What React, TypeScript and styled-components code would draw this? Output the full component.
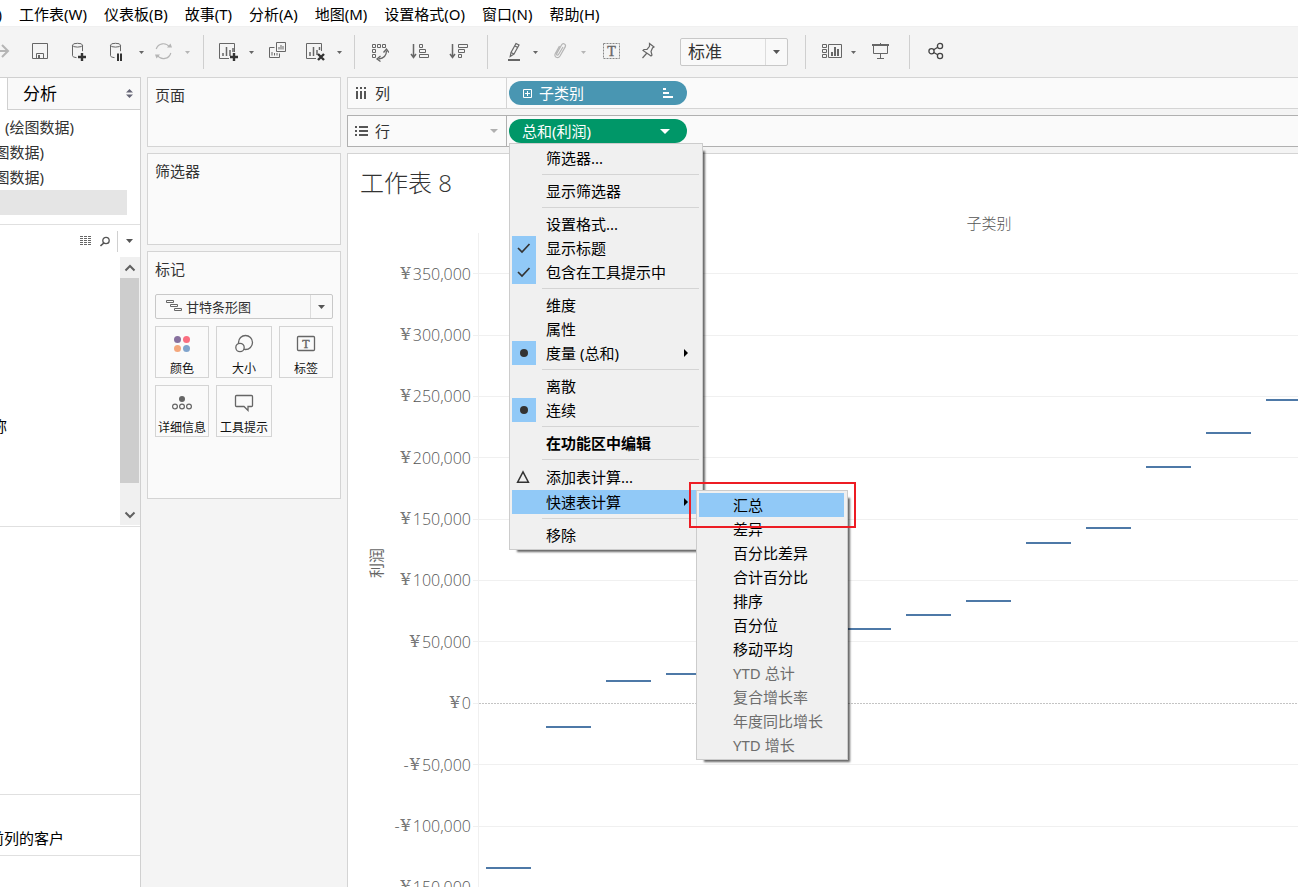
import React from "react";
import styled, { createGlobalStyle, css } from "styled-components";

const ui = `"Noto Sans", "Noto Sans CJK SC", sans-serif`;
const light = `"Open Sans", "Noto Sans CJK SC", sans-serif`;

const GlobalStyle = createGlobalStyle`
  *, *::before, *::after { box-sizing: border-box; }
  body { margin: 0; background: #f4f4f4; font: 15px/24px ${ui}; color: #333; }
  button, select { font: inherit; color: inherit; margin: 0; padding: 0; border: 0; background: none; border-radius: 0; }
  ul { list-style: none; margin: 0; padding: 0; }
  h1, h2 { margin: 0; font: inherit; }
  svg { display: block; flex: none; }
`;

const Shell = styled.div`
  display: flex;
  flex-direction: column;
  height: 100vh;
  overflow: hidden;
  white-space: nowrap;
`;

/* ---------- Menu bar ---------- */
const MenuBar = styled.nav`
  display: flex;
  gap: 17px;
  height: 26px;
  flex: none;
  padding-top: 1px;
  background: #fff;
  color: #000;
  align-items: center;
  line-height: 24px;
`;
const CutOff = styled.div<{ $w: number }>`
  display: flex;
  justify-content: flex-end;
  width: ${(p) => p.$w}px;
  overflow: hidden;
`;
const MenuBarItem = styled.button``;

/* ---------- Toolbar ---------- */
const Toolbar = styled.div`
  display: flex;
  align-items: center;
  height: 51px;
  flex: none;
  border-top: 1px solid #f0f0f0;
  color: #666;
`;
const ToolGroup = styled.div<{ $before?: number; $after?: number; $last?: boolean }>`
  display: flex;
  align-items: center;
  height: 34px;
  padding-left: ${(p) => p.$before ?? 0}px;
  padding-right: ${(p) => p.$after ?? 0}px;
  border-right: ${(p) => (p.$last ? "0" : "1px solid #cfcfcf")};
`;
const Tool = styled.button<{ $gap?: number; $w?: number; $dim?: boolean }>`
  display: flex;
  justify-content: flex-end;
  width: ${(p) => p.$w ?? 20}px;
  height: 20px;
  margin-left: ${(p) => p.$gap ?? 0}px;
  overflow: hidden;
  color: ${(p) => (p.$dim ? "#b5b5b5" : "#666")};
`;
const CaretTool = styled.button<{ $gap?: number; $dim?: boolean }>`
  display: flex;
  align-items: center;
  justify-content: center;
  width: 10px;
  height: 20px;
  margin-left: ${(p) => p.$gap ?? 8}px;
  color: ${(p) => (p.$dim ? "#b5b5b5" : "#666")};
`;
const SelectBox = styled.label<{ $h: number; $gap?: number }>`
  display: flex;
  align-items: center;
  height: ${(p) => p.$h}px;
  margin-left: ${(p) => p.$gap ?? 0}px;
  border: 1px solid #c8c8c8;
  border-radius: 2px;
  background: #f9f9f9;
  color: #333;
`;
const Select = styled.select<{ $size: number; $pad: number; $w?: number }>`
  appearance: none;
  flex: 1;
  width: ${(p) => (p.$w ? `${p.$w}px` : "auto")};
  min-width: 0;
  height: 100%;
  padding-left: ${(p) => p.$pad}px;
  font-size: ${(p) => p.$size}px;
`;
const SelectCaret = styled.span`
  display: flex;
  align-items: center;
  justify-content: center;
  width: 22px;
  align-self: stretch;
  border-left: 1px solid #dcdcdc;
  color: #555;
`;

/* ---------- Body ---------- */
const Body = styled.div`
  display: grid;
  grid-template-columns: 141px 206px minmax(0, 1fr);
  flex: 1;
  min-height: 0;
`;
const DataPane = styled.aside`
  display: flex;
  flex-direction: column;
  background: #fff;
  border-top: 1px solid #d0d0d0;
  border-right: 1px solid #d0d0d0;
  overflow: hidden;
  color: #000;
`;
const PaneTab = styled.button`
  display: flex;
  align-items: center;
  justify-content: space-between;
  flex: none;
  height: 32px;
  margin-left: 7px;
  padding: 0 7px 0 15px;
  border-left: 1px solid #d0d0d0;
  border-bottom: 1px solid #d0d0d0;
  background: #f9f9f9;
  font-size: 17px;
  color: #000;
`;
const SourceList = styled.ul`
  height: 115px;
  flex: none;
  padding-top: 5px;
  border-bottom: 1px solid #e0e0e0;
  color: #333;
`;
const SourceRow = styled.li<{ $selected?: boolean }>`
  height: 25px;
  width: 127px;
  line-height: 25px;
  background: ${(p) => (p.$selected ? "#e5e5e5" : "transparent")};
`;
const FieldTools = styled.div`
  display: flex;
  align-items: center;
  justify-content: flex-end;
  height: 32px;
  flex: none;
  color: #555;
`;
const FieldTool = styled.button<{ $w: number; $line?: boolean }>`
  display: flex;
  align-items: center;
  justify-content: ${(p) => (p.$line ? "center" : "flex-start")};
  width: ${(p) => p.$w}px;
  height: 21px;
  border-left: ${(p) => (p.$line ? "1px solid #d0d0d0" : "0")};
`;
const Fields = styled.div`
  display: flex;
  justify-content: space-between;
  height: 270px;
  flex: none;
  border-bottom: 1px solid #e0e0e0;
`;
const FieldName = styled.div<{ $top: number; $w: number }>`
  display: flex;
  justify-content: flex-end;
  width: ${(p) => p.$w}px;
  overflow: hidden;
  padding-top: ${(p) => p.$top}px;
`;
const ScrollBar = styled.div`
  display: flex;
  flex-direction: column;
  width: 20px;
  height: 268px;
  padding-right: 1px;
  background: #f0f0f0;
  color: #606060;
`;
const ScrollButton = styled.button`
  display: flex;
  align-items: center;
  justify-content: center;
  height: 21px;
`;
const ScrollThumb = styled.div`
  height: 205px;
  margin-bottom: auto;
  background: #cdcdcd;
`;
const Measures = styled.div`
  height: 268px;
  flex: none;
  border-bottom: 1px solid #e0e0e0;
`;
const Sets = styled.div`
  height: 61px;
  flex: none;
  border-bottom: 1px solid #e0e0e0;
`;

/* ---------- Cards ---------- */
const Cards = styled.div`
  display: flex;
  flex-direction: column;
  gap: 6px;
  padding: 0 6px;
`;
const Card = styled.section<{ $h: number }>`
  height: ${(p) => p.$h}px;
  flex: none;
  padding: 5px 7px;
  border: 1px solid #d4d4d4;
  background: #fafafa;
`;
const MarkSelect = styled.div`
  margin: 13px 0 7px;
`;
const MarkIcon = styled.span`
  padding: 0 0 4px 10px;
  color: #666;
`;
const MarkGrid = styled.div`
  display: grid;
  grid-template-columns: 54fr 56fr 54fr;
  gap: 7px;
`;
const MarkButton = styled.button`
  display: flex;
  flex-direction: column;
  align-items: center;
  justify-content: space-between;
  height: 52px;
  padding-top: 5px;
  border: 1px solid #d4d4d4;
  color: #666;
  font-size: 12px;
  line-height: 17px;
`;
const MarkLabel = styled.span`
  color: #111;
`;

/* ---------- Shelves ---------- */
const Main = styled.main`
  display: flex;
  flex-direction: column;
  gap: 6px;
  min-width: 0;
  min-height: 0;
`;
const Shelf = styled.div<{ $active?: boolean }>`
  --line: ${(p) => (p.$active ? "#b0b0b0" : "#d4d4d4")};
  display: flex;
  height: 32px;
  flex: none;
  border: 1px solid var(--line);
  border-right: 0;
  background: #fafafa;
`;
const ShelfName = styled.div`
  display: flex;
  align-items: center;
  gap: 7px;
  width: 159px;
  padding: 0 8px 0 7px;
  border-right: 1px solid var(--line);
`;
const Push = styled.span`
  margin-left: auto;
  color: #b0b0b0;
`;
const PillSlot = styled.div`
  position: relative;
  z-index: 2;
  padding: 3px 2px;
`;
const Pill = styled.button<{ $bg: string; $pad: string }>`
  display: flex;
  align-items: center;
  gap: 7px;
  width: 178px;
  height: 24px;
  padding: ${(p) => p.$pad};
  border-radius: 12px;
  background: ${(p) => p.$bg};
  color: #fff;
`;
const PillEnd = styled.span`
  margin-left: auto;
`;

/* ---------- Context menus ---------- */
const menuFrame = css`
  position: absolute;
  padding: 2px 3px 2px 2px;
  border: 1px solid #ccc;
  background: #f0f0f0;
  box-shadow: 5px 5px 2px -3px rgba(0, 0, 0, 0.6);
  color: #000;
`;
const Menu = styled.ul`
  ${menuFrame}
  top: 27px;
  left: 2px;
  width: 194px;
`;
const SubMenu = styled.ul`
  ${menuFrame}
  top: 0;
  left: 184px;
  width: 152px;
`;
const MenuRow = styled.li<{ $tall?: boolean }>`
  position: relative;
  padding: ${(p) => (p.$tall ? 1 : 0)}px 0;
`;
const MenuItem = styled.button<{ $hot?: boolean; $bold?: boolean }>`
  display: flex;
  align-items: center;
  width: 100%;
  height: 24px;
  line-height: 24px;
  text-align: left;
  background: ${(p) => (p.$hot ? "#91c9f7" : "transparent")};
  font-weight: ${(p) => (p.$bold ? 700 : 400)};
  &:disabled {
    color: #6d6d6d;
  }
`;
const Gutter = styled.span<{ $on?: boolean }>`
  display: flex;
  align-items: center;
  justify-content: center;
  width: 24px;
  height: 24px;
  margin-right: 10px;
  background: ${(p) => (p.$on ? "#91c9f7" : "transparent")};
  color: #333;
`;
const SubArrow = styled.span`
  margin-left: auto;
  padding-right: 11px;
`;
const MenuRule = styled.li`
  height: 1px;
  margin: 4px 0 4px 30px;
  background: #d4d4d4;
`;
const Highlight = styled.li`
  position: absolute;
  top: -9px;
  left: -8px;
  width: 167px;
  height: 46px;
  border: 2px solid #ed1c24;
  pointer-events: none;
`;

/* ---------- Worksheet ---------- */
const Sheet = styled.section`
  flex: 1;
  min-height: 0;
  padding-left: 12px;
  border: solid #d4d4d4;
  border-width: 1px 0 0 1px;
  background: #fff;
  overflow: hidden;
`;
const SheetTitle = styled.h1`
  height: 57px;
  font: 300 24px/57px ${light};
  word-spacing: normal;
  color: #333;
`;
const Chart = styled.div`
  display: grid;
  grid-template-columns: 32px 79px 1028px;
  color: #666;
`;
const ColumnTitle = styled.h2`
  grid-column: 3;
  height: 22px;
  padding-left: 8px;
  font: 300 15px/24px ${light};
  text-align: center;
  color: #555;
`;
const AxisTitle = styled.div`
  display: flex;
  align-items: center;
  justify-content: center;
  height: 660px;
  font-size: 15px;
`;
const Rotated = styled.span`
  transform: rotate(-90deg);
`;
const AxisLabels = styled.ul`
  display: grid;
  grid-template-rows: repeat(11, 1fr);
  height: 685px;
  padding-top: 10px;
  font: 300 16px/20px ${light};
  color: #555;
`;
const AxisLabel = styled.li`
  display: flex;
  align-items: center;
  justify-content: flex-end;
`;
const Yen = styled.span`
  padding: 0 2px 0 1px;
  font: 16px/20px "DejaVu Serif", serif;
  color: #777;
`;

/* ---------- Icons ---------- */
const Icon = ({ w = 20, h = 20, children }: { w?: number; h?: number; children: React.ReactNode }) => (
  <svg width={w} height={h} viewBox={`0 0 ${w} ${h}`} fill="none" stroke="currentColor" aria-hidden="true">
    {children}
  </svg>
);
const Caret = ({ w = 5, h = 3 }: { w?: number; h?: number }) => (
  <svg width={w} height={h} viewBox={`0 0 ${w} ${h}`} fill="currentColor" aria-hidden="true">
    <path d={`M0 0H${w}L${w / 2} ${h}Z`} />
  </svg>
);

const Forward = () => <Icon><path d="M0 9H18M12 3l6 6-6 6" strokeWidth="2" /></Icon>;
const Save = () => (
  <Icon><path d="M2.5 1.5h15v15h-15zM6.5 16.5v-5h7v5" /><path d="M8 13h2v3H8z" fill="currentColor" stroke="none" /></Icon>
);
const DataAdd = () => (
  <Icon>
    <ellipse cx="9.5" cy="3.2" rx="5" ry="1.9" /><path d="M4.5 3.2v10.5c0 1 1.8 1.7 4 1.9M14.5 3.2v6" />
    <path d="M10 15h8M14 11v8" stroke="#333" strokeWidth="2.4" />
  </Icon>
);
const DataPause = () => (
  <Icon>
    <ellipse cx="7.5" cy="3.2" rx="5" ry="1.9" /><path d="M2.5 3.2v10.5c0 1 1.8 1.7 4 1.9M12.5 3.2v6" />
    <path d="M10 11.500v7.500M13 11.500v7.500" stroke="#333" strokeWidth="2" />
  </Icon>
);
const Refresh = () => (
  <Icon>
    <path d="M2.2 7A7.5 7.5 0 0 1 15.500 5M16.8 11A7.5 7.5 0 0 1 3.500 13.500" strokeWidth="1.2" />
    <path d="M13 5.5h5l-1.500-4zM6 12.500H1l1.500 4z" fill="currentColor" stroke="none" />
  </Icon>
);
const SheetAdd = () => (
  <Icon>
    <path d="M11 16.500H1.500v-15h15V10" /><path d="M5 11v3M8.500 5v9M12 8v6M15 6v4" strokeWidth="1.500" />
    <path d="M12 15h8M16 11v8" stroke="#333" strokeWidth="2.4" />
  </Icon>
);
const SheetCopy = () => (
  <Icon>
    <path d="M8.500.500h9v9h-9zM6.500 5.500h-5v10h10v-4" />
    <path d="M11 5v2.500M13 3v4.500M15 4v3.500M4 10v3.500M6.500 11v2.500M9 11v2.500" />
  </Icon>
);
const SheetClear = () => (
  <Icon>
    <path d="M10 16.500H.5v-15h15V9" /><path d="M4 10v4M7.500 5v9M11 8v5M13.500 5v3" strokeWidth="1.500" />
    <path d="M12 12l6 6M18 12l-6 6" stroke="#333" strokeWidth="2.400" />
  </Icon>
);
const Swap = () => (
  <Icon>
    <path d="M3.500 2.500h3v3h-3zM8.500 2.500h3v3h-3zM13.500 2.500h3v3h-3zM3.500 7.500h3v3h-3zM3.500 12.500h3v3h-3z" />
    <path d="M17.500 8.500c0 5-3 8-8 8.500" strokeWidth="1.300" /><path d="M14.500 10.500l3-3.500 2.500 3.500M11.500 14l-3.500 3 3.500 2.500" strokeWidth="1.300" />
  </Icon>
);
const SortAsc = () => (
  <Icon>
    <path d="M4.500 2v13M2 12l2.500 3.500L7 12" strokeWidth="1.500" />
    <path d="M10.500 2.500h3v3h-3zM10.500 7.500h6v3h-6zM10.500 12.500h9v3h-9z" />
  </Icon>
);
const SortDesc = () => (
  <Icon>
    <path d="M3.500 2v13M1 12l2.500 3.500L6 12" strokeWidth="1.500" />
    <path d="M9.500 2.500h9v3h-9zM9.500 7.500h6v3h-6zM9.500 12.500h3v3h-3z" />
  </Icon>
);
const Pen = () => (
  <Icon>
    <path d="M14 1.500l3 1.500-5 9-3-1.500zM9 10.500l-.8 4L12 12M13 4l2.800 1.500" strokeWidth="1.200" />
    <path d="M6 18h12" strokeWidth="2" />
  </Icon>
);
const Clip = () => (
  <Icon>
    <path d="M13 5l-4.500 7.500c-.8 1.400-2.500.5-1.800-.9L11.500 3c1.500-2.500 5-.8 3.700 1.900L10 14c-2 3.200-6.500 1-4.700-2.500L9.500 4" strokeWidth="1.200" />
  </Icon>
);
const LabelT = () => (
  <Icon>
    <rect x="1.500" y="1.500" width="16" height="15" strokeDasharray="2 1" stroke="#888" />
    <text x="9.500" y="14" fontSize="14" fontFamily="Liberation Serif, serif" textAnchor="middle" fill="currentColor" stroke="currentColor" strokeWidth=".4">T</text>
  </Icon>
);
const Pin = () => (
  <Icon>
    <path d="M11.500 1.500l4.500 3.500-1.500 1-1.500 3.500 1 3.500-1 1L5 8.500l1-1 3-.2 2.500-3zM8.500 11.500L4.500 16" strokeWidth="1.200" />
  </Icon>
);
const ShowMe = () => (
  <Icon w={24}>
    <path d="M2.500 2.500h4v3h-4zM2.500 7.500h4v3h-4zM2.500 12.500h4v3h-4zM8.500 2.500h13v13h-13z" />
    <path d="M12 10v4M15 5v9M18 7v7" strokeWidth="2" />
  </Icon>
);
const Present = () => (
  <Icon><path d="M0 3h17" strokeWidth="2" /><path d="M1.500 3v8.500h14V3M8.500 1v1M8.500 11.500v5M5 16.500h7" /></Icon>
);
const Share = () => (
  <Icon>
    <g stroke="#444" strokeWidth="1.300">
      <circle cx="5.500" cy="9.200" r="2.600" /><circle cx="14" cy="4" r="2.600" /><circle cx="14" cy="14" r="2.600" />
      <path d="M7.700 7.800l4-2.500M7.700 10.500l4 2.300" />
    </g>
  </Icon>
);
const ColumnsIcon = () => (
  <Icon w={13} h={12}><path d="M2 0v2M6 0v2M10 0v2M2 4v8M6 4v8M10 4v8" stroke="#555" strokeWidth="2" /></Icon>
);
const RowsIcon = () => (
  <Icon w={13} h={12}><path d="M0 2h2M0 6h2M0 10h2M4 2h9M4 6h9M4 10h9" stroke="#555" strokeWidth="2" /></Icon>
);
const Check = () => <Icon w={14} h={12}><path d="M1 6l4 4 7.500-8" strokeWidth="1.700" /></Icon>;
const Dot = () => <Icon w={10} h={10}><circle cx="5" cy="5" r="4" fill="currentColor" stroke="none" /></Icon>;
const Delta = () => <Icon w={16} h={14}><path d="M7 1.800l5.400 10.400H1.600z" strokeWidth="1.500" /></Icon>;

/* ---------- Data ---------- */
type Entry = { text: string; mark?: "check" | "dot" | "delta"; bold?: boolean; arrow?: boolean; hot?: boolean; tall?: boolean } | null;
const entries: Entry[] = [
  { text: "筛选器..." },
  null,
  { text: "显示筛选器" },
  null,
  { text: "设置格式..." },
  { text: "显示标题", mark: "check" },
  { text: "包含在工具提示中", mark: "check" },
  null,
  { text: "维度" },
  { text: "属性" },
  { text: "度量 (总和)", mark: "dot", arrow: true },
  null,
  { text: "离散" },
  { text: "连续", mark: "dot" },
  null,
  { text: "在功能区中编辑", bold: true },
  null,
  { text: "添加表计算...", mark: "delta", tall: true },
  { text: "快速表计算", arrow: true, hot: true },
  null,
  { text: "移除" },
];
const calculations = ["汇总", "差异", "百分比差异", "合计百分比", "排序", "百分位", "移动平均", "YTD 总计", "复合增长率", "年度同比增长", "YTD 增长"];
const marks = { check: <Check />, dot: <Dot />, delta: <Delta /> };

const menus = ["工作表(W)", "仪表板(B)", "故事(T)", "分析(A)", "地图(M)", "设置格式(O)", "窗口(N)", "帮助(H)"];
const ticks = [
  ["", "350,000"], ["", "300,000"], ["", "250,000"], ["", "200,000"], ["", "150,000"], ["", "100,000"],
  ["", "50,000"], ["", "0"], ["-", "50,000"], ["-", "100,000"], ["-", "150,000"],
];
const gridLines = [40, 102, 163, 224, 286, 347, 408, 470, 531, 593, 654];
const bars = [635, 494, 448, 441, 427, 410, 396, 382, 368, 310, 295, 234, 200, 167, 140, 120, 90];

const QuickCalcMenu = () => (
  <SubMenu role="menu" aria-label="快速表计算">
    {calculations.map((text, i) => (
      <MenuRow key={text}>
        <MenuItem role="menuitem" $hot={i === 0} disabled={i > 6}>
          <Gutter />
          {text}
        </MenuItem>
      </MenuRow>
    ))}
    <Highlight role="presentation" />
  </SubMenu>
);

const PillMenu = () => (
  <Menu role="menu">
    {entries.map((e, i) =>
      e === null ? (
        <MenuRule key={i} role="separator" />
      ) : (
        <MenuRow key={i} $tall={e.tall}>
          <MenuItem role="menuitem" $hot={e.hot} $bold={e.bold}>
            <Gutter $on={e.mark === "check" || e.mark === "dot"}>{e.mark && marks[e.mark]}</Gutter>
            {e.text}
            {e.arrow && (
              <SubArrow>
                <Icon w={5} h={8}><path d="M1 0l4 4-4 4z" fill="#000" stroke="none" /></Icon>
              </SubArrow>
            )}
          </MenuItem>
          {e.hot && <QuickCalcMenu />}
        </MenuRow>
      )
    )}
  </Menu>
);

const Plot = () => (
  <svg width="1028" height="685" viewBox="0 0 1028 685" shapeRendering="crispEdges" role="img" aria-label="利润 / 子类别">
    <path d="M7.500 0V685" stroke="#f0f0f0" />
    {gridLines.map((y) => (
      <g key={y}>
        <path d={`M2 ${y + 0.5}H${y === 470 ? 7 : 1028}`} stroke="#f0f0f0" />
        {y === 470 && <path d="M8 470.500H1028" stroke="#c4c4c4" strokeDasharray="2 1" />}
      </g>
    ))}
    {bars.map((y, i) => (
      <rect key={i} x={15 + i * 60} y={y - 1} width="45" height="2" fill="#4e79a7" />
    ))}
  </svg>
);

export default function App() {
  return (
    <Shell>
      <GlobalStyle />
      <MenuBar>
        <CutOff $w={2}><MenuBarItem>数据(D)</MenuBarItem></CutOff>
        {menus.map((m) => <MenuBarItem key={m}>{m}</MenuBarItem>)}
      </MenuBar>

      <Toolbar role="toolbar">
        <ToolGroup $after={11}>
          <Tool $w={10} $dim aria-label="前进"><Forward /></Tool>
          <Tool $gap={20} aria-label="保存"><Save /></Tool>
          <Tool $gap={18} aria-label="新建数据源"><DataAdd /></Tool>
          <Tool $gap={20} aria-label="暂停自动更新"><DataPause /></Tool>
          <CaretTool aria-label="更新选项"><Caret /></CaretTool>
          <Tool $gap={8} $dim aria-label="运行更新"><Refresh /></Tool>
          <CaretTool $dim aria-label="运行选项"><Caret /></CaretTool>
        </ToolGroup>
        <ToolGroup $before={14} $after={10}>
          <Tool aria-label="新建工作表"><SheetAdd /></Tool>
          <CaretTool aria-label="新建选项"><Caret /></CaretTool>
          <Tool $gap={12} aria-label="复制工作表"><SheetCopy /></Tool>
          <Tool $gap={18} aria-label="清除工作表"><SheetClear /></Tool>
          <CaretTool aria-label="清除选项"><Caret /></CaretTool>
        </ToolGroup>
        <ToolGroup $before={14} $after={18}>
          <Tool aria-label="交换行和列"><Swap /></Tool>
          <Tool $gap={20} aria-label="升序排序"><SortAsc /></Tool>
          <Tool $gap={20} aria-label="降序排序"><SortDesc /></Tool>
        </ToolGroup>
        <ToolGroup $before={14} $after={17}>
          <Tool aria-label="突出显示"><Pen /></Tool>
          <CaretTool aria-label="突出显示选项"><Caret /></CaretTool>
          <Tool $gap={10} $dim aria-label="组成员"><Clip /></Tool>
          <CaretTool $dim aria-label="组选项"><Caret /></CaretTool>
          <Tool $gap={14} aria-label="显示标记标签"><LabelT /></Tool>
          <Tool $gap={16} aria-label="固定轴"><Pin /></Tool>
          <SelectBox $h={28} $gap={22}>
            <Select $size={17} $pad={7} $w={84} aria-label="适合"><option>标准</option></Select>
            <SelectCaret><Caret w={7} h={4} /></SelectCaret>
          </SelectBox>
        </ToolGroup>
        <ToolGroup $before={14} $after={17}>
          <Tool $w={24} aria-label="显示卡"><ShowMe /></Tool>
          <CaretTool $gap={4} aria-label="显示卡选项"><Caret /></CaretTool>
          <Tool $gap={14} aria-label="演示模式"><Present /></Tool>
        </ToolGroup>
        <ToolGroup $before={16} $last>
          <Tool aria-label="共享"><Share /></Tool>
        </ToolGroup>
      </Toolbar>

      <Body>
        <DataPane>
          <PaneTab>
            分析
            <Icon w={7} h={9}><path d="M3.500 0L7 3.500H0zM0 5.500h7L3.500 9z" fill="#667" stroke="none" /></Icon>
          </PaneTab>
          <SourceList>
            <SourceRow><CutOff $w={74}>(绘图数据)</CutOff></SourceRow>
            <SourceRow><CutOff $w={44}>(绘图数据)</CutOff></SourceRow>
            <SourceRow><CutOff $w={44}>(绘图数据)</CutOff></SourceRow>
            <SourceRow $selected />
          </SourceList>
          <FieldTools>
            <FieldTool $w={20} aria-label="查看数据">
              <Icon w={12} h={10}>
                <path d="M0 .5h12M0 2.500h12M0 4.500h12M0 6.500h12M0 8.500h12" strokeDasharray="3 1" stroke="#666" />
              </Icon>
            </FieldTool>
            <FieldTool $w={17} aria-label="查找字段">
              <Icon w={11} h={11}><circle cx="6" cy="4.500" r="3.200" strokeWidth="1.300" /><path d="M3.800 7L.5 10" strokeWidth="1.600" /></Icon>
            </FieldTool>
            <FieldTool $w={23} $line aria-label="选项"><Caret w={7} h={4} /></FieldTool>
          </FieldTools>
          <Fields>
            <FieldName $top={157} $w={7}>客户名称</FieldName>
            <ScrollBar>
              <ScrollButton aria-label="向上滚动">
                <Icon w={12} h={8}><path d="M1.500 6.500L6 2l4.500 4.500" strokeWidth="2" /></Icon>
              </ScrollButton>
              <ScrollThumb />
              <ScrollButton aria-label="向下滚动">
                <Icon w={12} h={8}><path d="M1.500 1.500L6 6l4.500-4.500" strokeWidth="2" /></Icon>
              </ScrollButton>
            </ScrollBar>
          </Fields>
          <Measures />
          <Sets><FieldName $top={31} $w={64}>排在前列的客户</FieldName></Sets>
        </DataPane>

        <Cards>
          <Card $h={70}><h2>页面</h2></Card>
          <Card $h={92}><h2>筛选器</h2></Card>
          <Card $h={248}>
            <h2>标记</h2>
            <MarkSelect>
              <SelectBox $h={25}>
                <MarkIcon>
                  <Icon w={16} h={12}><path d="M.5 1.500h7v2h-7zM4.500 5.500h7v2h-7zM8.500 9.500h7v2h-7z" /></Icon>
                </MarkIcon>
                <Select $size={13} $pad={4} aria-label="标记类型"><option>甘特条形图</option></Select>
                <SelectCaret><Caret w={7} h={4} /></SelectCaret>
              </SelectBox>
            </MarkSelect>
            <MarkGrid>
              <MarkButton>
                <Icon w={24} h={24}>
                  <g stroke="none">
                    <circle cx="7.500" cy="7.500" r="3.500" fill="#87709e" /><circle cx="16.500" cy="7.500" r="3.500" fill="#fa6e80" />
                    <circle cx="7.500" cy="16.500" r="3.500" fill="#f4a77c" /><circle cx="16.500" cy="16.500" r="3.500" fill="#80a4cd" />
                  </g>
                </Icon>
                <MarkLabel>颜色</MarkLabel>
              </MarkButton>
              <MarkButton>
                <Icon w={24} h={24}>
                  <circle cx="13.500" cy="10.500" r="7" strokeWidth="1.300" /><circle cx="8" cy="15.500" r="4.200" strokeWidth="1.300" fill="#fafafa" />
                </Icon>
                <MarkLabel>大小</MarkLabel>
              </MarkButton>
              <MarkButton>
                <Icon w={24} h={24}>
                  <rect x="3.500" y="4.500" width="17" height="14" rx="1" strokeWidth="1.300" />
                  <text x="12" y="16" fontSize="12" fontFamily="Liberation Serif, serif" textAnchor="middle" fill="currentColor" stroke="currentColor" strokeWidth=".4">T</text>
                </Icon>
                <MarkLabel>标签</MarkLabel>
              </MarkButton>
              <MarkButton>
                <Icon w={24} h={24}>
                  <circle cx="12" cy="8" r="3" fill="currentColor" stroke="none" />
                  <circle cx="5" cy="15.500" r="2.400" strokeWidth="1.200" /><circle cx="12" cy="15.500" r="2.400" strokeWidth="1.200" /><circle cx="19" cy="15.500" r="2.400" strokeWidth="1.200" />
                </Icon>
                <MarkLabel>详细信息</MarkLabel>
              </MarkButton>
              <MarkButton>
                <Icon w={24} h={24}><path d="M4.500 4.500h15q1 0 1 1v9q0 1-1 1H16v4l-4-4H4.500q-1 0-1-1v-9q0-1 1-1z" strokeWidth="1.300" /></Icon>
                <MarkLabel>工具提示</MarkLabel>
              </MarkButton>
            </MarkGrid>
          </Card>
        </Cards>

        <Main>
          <Shelf>
            <ShelfName><ColumnsIcon />列</ShelfName>
            <PillSlot>
              <Pill $bg="#4996b2" $pad="0 14px">
                <Icon w={9} h={9}><path d="M.5.5h8v8h-8zM2 4.500h5M4.500 2v5" /></Icon>
                子类别
                <PillEnd><Icon w={11} h={10}><path d="M1 1h3M1 5h6M1 9h10" strokeWidth="2" /></Icon></PillEnd>
              </Pill>
            </PillSlot>
          </Shelf>
          <Shelf $active>
            <ShelfName><RowsIcon />行<Push><Caret w={8} h={4} /></Push></ShelfName>
            <PillSlot>
              <Pill $bg="#009768" $pad="0 17px 0 13px" aria-haspopup="menu" aria-expanded>
                总和(利润)
                <PillEnd><Caret w={10} h={5} /></PillEnd>
              </Pill>
              <PillMenu />
            </PillSlot>
          </Shelf>
          <Sheet>
            <SheetTitle>工作表 8</SheetTitle>
            <Chart>
              <ColumnTitle>子类别</ColumnTitle>
              <AxisTitle><Rotated>利润</Rotated></AxisTitle>
              <AxisLabels>
                {ticks.map(([sign, n]) => <AxisLabel key={sign + n}>{sign}<Yen>¥</Yen>{n}</AxisLabel>)}
              </AxisLabels>
              <Plot />
            </Chart>
          </Sheet>
        </Main>
      </Body>
    </Shell>
  );
}
